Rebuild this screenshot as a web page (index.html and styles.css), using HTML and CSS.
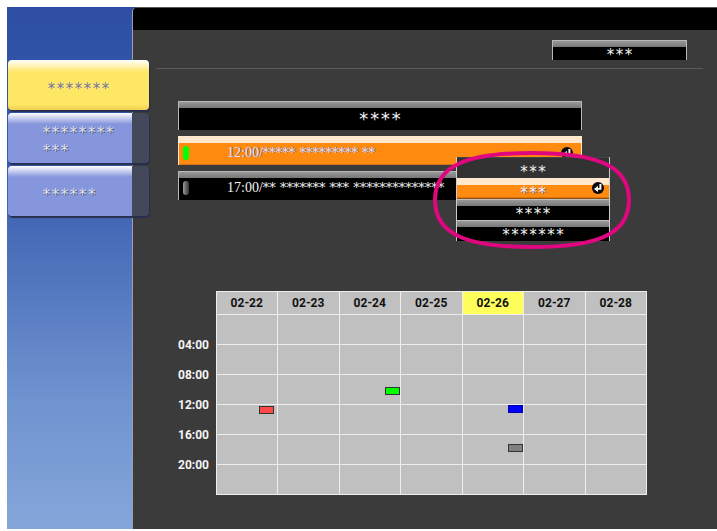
FILE: index.html
```html
<!DOCTYPE html>
<html lang="en">
<head>
<meta charset="utf-8">
<title>Schedule</title>
<link rel="stylesheet" href="styles.css">
</head>
<body>
<svg class="defs" width="0" height="0" aria-hidden="true">
  <symbol id="enter" viewBox="0 0 12 12">
    <circle cx="6" cy="6" r="6" fill="#0a0a0a"/>
    <path d="M7.4 2H9.4V7.8H6V10L2 6.9L6 3.8V6H7.4Z" fill="#fff"/>
  </symbol>
</svg>
<div class="screen">
  <nav class="sidebar">
    <button class="tab tab-active" type="button">*******</button>
    <button class="tab tab-left" type="button">********<br>***</button>
    <button class="tab tab-left" type="button">******</button>
  </nav>
  <main class="main">
    <div class="topbar"></div>
    <header class="toolbar">
      <button class="bar action" type="button">***</button>
    </header>
    <section class="list">
      <div class="bar list-title">****</div>
      <button class="bar row row-selected" type="button">
        <span class="lamp lamp-on"></span>
        <span class="row-text">12:00/<span class="stars">***** ********* **</span></span>
        <svg class="enter"><use href="#enter"/></svg>
      </button>
      <button class="bar row" type="button">
        <span class="lamp"></span>
        <span class="row-text">17:00/<span class="stars">** ******* *** **************</span></span>
      </button>
      <div class="menu">
        <button class="item item-dim" type="button">***</button>
        <button class="item item-selected" type="button">***<svg class="enter"><use href="#enter"/></svg></button>
        <button class="item" type="button">****</button>
        <button class="item" type="button">*******</button>
        <svg class="callout" viewBox="0 0 198 98" aria-hidden="true">
          <path d="M99 2C165 2 196 15 196 49S165 96 99 96S2 83 2 49S33 2 99 2Z" fill="none" stroke="#e0067f" stroke-width="4"/>
        </svg>
      </div>
    </section>
    <table class="calendar">
      <thead>
        <tr><td class="corner"></td><th>02-22</th><th>02-23</th><th>02-24</th><th>02-25</th><th class="today">02-26</th><th>02-27</th><th>02-28</th></tr>
      </thead>
      <tbody>
        <tr><th>04:00</th><td></td><td></td><td></td><td></td><td></td><td></td><td></td></tr>
        <tr><th>08:00</th><td></td><td></td><td></td><td></td><td></td><td></td><td></td></tr>
        <tr><th>12:00</th><td></td><td></td><td><span class="event green" style="top:40%"></span></td><td></td><td></td><td></td><td></td></tr>
        <tr><th>16:00</th><td><span class="event red" style="top:5%"></span></td><td></td><td></td><td></td><td><span class="event blue" style="top:0%"></span></td><td></td><td></td></tr>
        <tr><th>20:00</th><td></td><td></td><td></td><td></td><td><span class="event gray" style="top:30%"></span></td><td></td><td></td></tr>
        <tr><th></th><td></td><td></td><td></td><td></td><td></td><td></td><td></td></tr>
      </tbody>
    </table>
  </main>
</div>
</body>
</html>
```
FILE: styles.css
```css
* { box-sizing: border-box; }
body { margin: 0; padding: 7px 0 2px 7px; background: #fff; }
button { margin: 0; padding: 0; border: 0; background: none; font: inherit; color: inherit; }
.defs { position: absolute; }

.screen {
  display: flex;
  min-height: calc(100vh - 9px);
  font: 15px/18px "DejaVu Sans Mono", monospace;
  color: #f4f4f4;
  background: linear-gradient(#2d4ea3, #3c60b0 35%, #6f93cf 75%, #84a6da);
}

.sidebar {
  position: relative;
  z-index: 1;
  flex: 0 0 125px;
  min-width: 0;
  display: flex;
  flex-direction: column;
  gap: 3px;
  padding: 53px 0 0 1px;
}
.tab {
  width: 141px;
  height: 50px;
  padding-top: 8px;
  border-radius: 4px;
  text-align: center;
  color: #dde0ea;
  text-shadow: 1px 1px 0 #505878;
  background:
    linear-gradient(#fff, rgba(255, 255, 255, 0) 11px) 0 0 / 124px 100% no-repeat,
    linear-gradient(to right, #8696dc 124px, #43485a 124px);
  box-shadow: 1px 2px 1px #26304e;
}
.tab-active {
  color: #777488;
  text-shadow: 1px 0 0 #fff4b0;
  background: linear-gradient(#fff, #ffe766 12px, #ffe766 44px, #f2cf50);
}
.tab-left { padding-left: 34px; text-align: left; }

.main {
  flex: 1;
  min-width: 0;
  border-left: 1px solid #9aa0b0;
  border-top: 1px solid #555;
  border-top-left-radius: 5px;
  background: #3b3b3b;
  overflow: hidden;
}
.topbar { height: 22px; background: #000; }
.toolbar {
  display: flex;
  justify-content: flex-end;
  margin: 0 14px 0 23px;
  padding: 10px 16px 8px 0;
  border-bottom: 1px solid #5c5c5c;
}

.bar {
  display: block;
  width: 100%;
  height: 29px;
  border: 1px solid #b8b8b8;
  border-bottom: 0;
  background: linear-gradient(#999, #777 6px, #000 6px);
  text-align: center;
}
.action { width: 135px; height: 20px; padding-top: 5px; }

.list {
  position: relative;
  display: grid;
  gap: 6px;
  margin: 32px 135px 0 45px;
}
.list-title { padding-top: 6px; font-size: 18px; line-height: 21px; }
.row {
  display: flex;
  align-items: center;
  padding: 4px 8px 0 4px;
  font: 14px/18px "Liberation Serif", serif;
}
.row-selected {
  border-color: #ffeacb;
  background: linear-gradient(#ffe8cd 6px, #ff8a10 6px, #ff8a10 27px, #a85c10);
  color: #e8e0f0;
  text-shadow: 1px 0 0 #75617c;
}
.lamp {
  width: 6px;
  height: 14px;
  margin-right: 38px;
  border-radius: 3px;
  background: linear-gradient(to right, #999, #333);
}
.lamp-on { background: #0f0; }
.row-text { flex: 1; text-align: left; white-space: nowrap; }
.stars { font: 13px/18px "DejaVu Serif", serif; }
.enter { width: 12px; height: 12px; }

.menu {
  position: absolute;
  z-index: 2;
  top: 56px;
  right: -28px;
  width: 154px;
  border: 1px solid #ccc;
  border-width: 0 1px;
}
.item {
  position: relative;
  display: block;
  width: 100%;
  height: 21px;
  padding-top: 5px;
  border-top: 1px solid #c0c0c0;
  background: linear-gradient(#999, #777 6px, #000 6px);
}
.item-dim { border-color: #444; background: #323232; }
.item-selected {
  border-color: #ffe8cd;
  color: #f4f0f4;
  text-shadow: 1px 1px 0 #75617c;
  background: linear-gradient(#ffe8cd 6px, #ff8a10 6px, #ff8a10 18px, #6e3b08);
}
.item .enter { position: absolute; right: 5px; top: 3px; }
.callout {
  position: absolute;
  left: -24px;
  top: -6px;
  width: 198px;
  height: 98px;
  pointer-events: none;
}

.calendar {
  width: calc(100% - 115px);
  margin: 91px 70px 0 45px;
  border-collapse: collapse;
  table-layout: fixed;
  font: 12px/16px Roboto, sans-serif;
}
.calendar tr { height: 30px; }
.calendar thead tr { height: 23px; }
.calendar th, .calendar td { padding: 0; }
.calendar th { font-weight: 700; }
.calendar td, .calendar thead th { position: relative; border: 1px solid #eee; background: #c0c0c0; }
.calendar thead th { color: #111; }
.calendar thead .today { background: #ffff5c; }
.calendar .corner { width: 38px; border: 0; background: none; }
.calendar tbody th { text-align: left; transform: translateY(15px); }
.event { position: absolute; right: 0; width: 15px; height: 8px; border: 1px solid #333; }
.red { background: #ff4848; right: 3px; }
.green { background: #0f0; }
.blue { background: #00f; border-color: #00a; }
.gray { background: #808080; }
```
